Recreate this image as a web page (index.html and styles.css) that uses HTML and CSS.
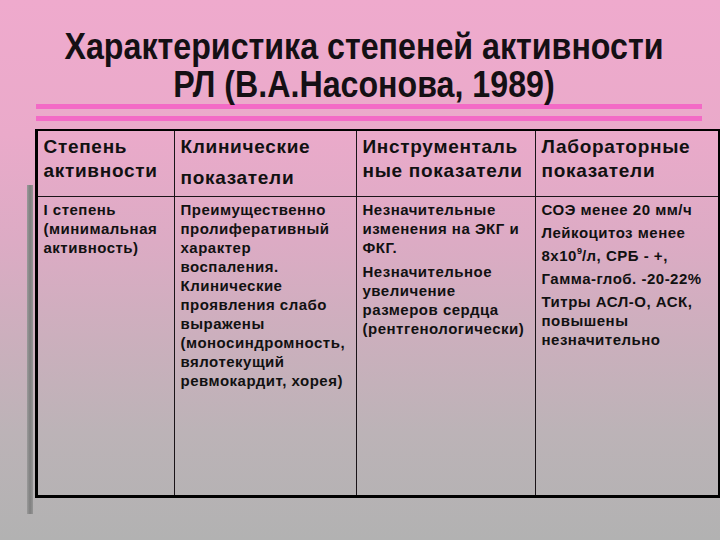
FILE: index.html
```html
<!DOCTYPE html>
<html lang="ru">
<head>
<meta charset="utf-8">
<title>Характеристика степеней активности РЛ</title>
<link rel="stylesheet" href="styles.css">
</head>
<body>
<div class="slide">
  <h1 class="title"><span class="title-line">Характеристика степеней активности</span><span class="title-line">РЛ (В.А.Насонова, 1989)</span></h1>
  <div class="rules">
    <div class="rule"></div>
    <div class="rule"></div>
  </div>
  <div class="content">
    <div class="side-bar"></div>
    <table class="grid">
      <colgroup>
        <col class="c1"><col class="c2"><col class="c3"><col class="c4">
      </colgroup>
      <tr class="head">
        <th>Степень активности</th>
        <th>Клинические <span class="gap-line">показатели</span></th>
        <th>Инструменталь ные показатели</th>
        <th>Лабораторные показатели</th>
      </tr>
      <tr class="body">
        <td>I степень (минимальная активность)</td>
        <td>Преимущественно пролиферативный характер воспаления. Клинические проявления слабо выражены (моносиндромность, вялотекущий ревмокардит, хорея)</td>
        <td><p class="para">Незначительные изменения на ЭКГ и ФКГ.</p><p class="para gap">Незначительное увеличение размеров сердца (рентгенологически)</p></td>
        <td class="lab"><p class="para">СОЭ менее 20 мм/ч</p><p class="para">Лейкоцитоз менее</p><p class="para">8х10<sup class="exp">9</sup>/л, СРБ - +,</p><p class="para">Гамма-глоб. -20-22%</p><p class="para">Титры АСЛ-О, АСК, повышены незначительно</p></td>
      </tr>
    </table>
  </div>
</div>
</body>
</html>
```

FILE: styles.css
```css
html, body {
  margin: 0;
  padding: 0;
}
body {
  width: 720px;
  height: 540px;
  overflow: hidden;
  font-family: "Liberation Sans", Arial, sans-serif;
  color: #111;
}
.slide {
  width: 720px;
  height: 540px;
  background: linear-gradient(180deg, #efaacd 0%, #eaaaca 25%, #dcabc4 45%, #ccafbd 62%, #bcb3b7 80%, #b2b2b2 100%);
  box-sizing: border-box;
  padding-top: 28px;
}
.title {
  margin: 0;
  padding-left: 8px;
  font-size: 37px;
  line-height: 38px;
  font-weight: bold;
  text-align: center;
  color: #141014;
}
.title-line {
  display: block;
  transform: scaleX(0.87);
  transform-origin: center;
  white-space: nowrap;
}
.rules {
  margin: 0 18px 0 36px;
  display: flex;
  flex-direction: column;
  gap: 7px;
}
.rule {
  height: 5px;
  background: #f36ac6;
}
.content {
  display: flex;
  align-items: flex-start;
  margin-top: 8px;
}
.side-bar {
  width: 6px;
  height: 329px;
  margin: 56px 2px 0 27px;
  background: linear-gradient(90deg, #9a9a9a, #7f7f7f 50%, #959595);
}
.grid {
  border-collapse: collapse;
  width: 684px;
  height: 369px;
  border-top: 2px solid #000;
  border-left: 3px solid #000;
  border-bottom: 3px solid #000;
  border-right: 2px solid #000;
  table-layout: fixed;
}
.c1 { width: 138px; }
.c2 { width: 182px; }
.c3 { width: 179px; }
.c4 { width: 184px; }
.grid th, .grid td {
  border: 1px solid #1a1418;
  vertical-align: top;
  text-align: left;
  padding: 0 3px 0 6px;
}
.head {
  height: 66px;
}
.head th {
  font-size: 19px;
  line-height: 24px;
  font-weight: bold;
  letter-spacing: 0.7px;
  padding-top: 4px;
}
.gap-line {
  display: block;
  margin-top: 7px;
}
.body td {
  font-size: 15px;
  line-height: 19px;
  font-weight: bold;
  letter-spacing: 0.5px;
  padding-top: 3px;
}
.para {
  margin: 0;
}
.para.gap {
  margin-top: 5px;
}
.lab .para + .para {
  margin-top: 4px;
}
.exp {
  font-size: 9px;
  line-height: 0;
  vertical-align: 7px;
  letter-spacing: 0;
}
```
